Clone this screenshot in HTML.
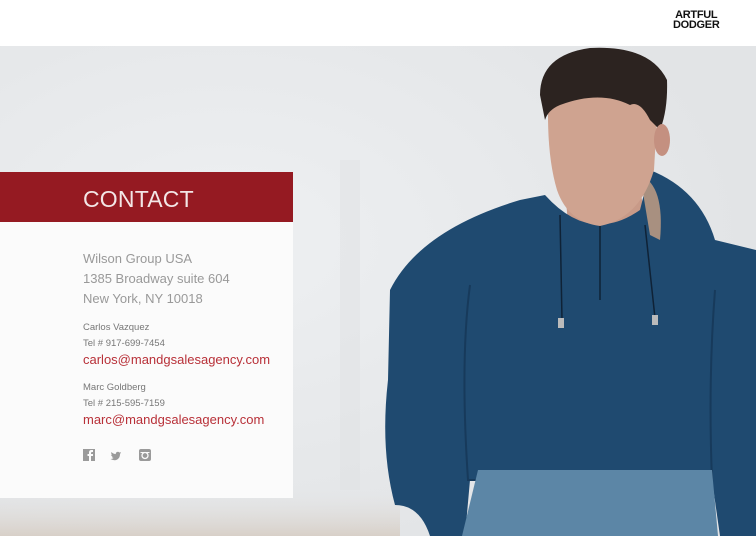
<!DOCTYPE html>
<html><head><style>
*{margin:0;padding:0}
body{width:756px;height:536px;overflow:hidden;position:relative;background:#fff;font-family:"Liberation Sans",sans-serif}
.hdr{position:absolute;left:0;top:0;width:756px;height:46px;background:#fff}
.logo{position:absolute;left:673px;top:10px;font-weight:bold;font-size:11px;line-height:10px;color:#111;text-align:center;letter-spacing:-0.3px}
.photo{position:absolute;left:0;top:46px;width:756px;height:490px}
.band{position:absolute;left:0;top:172px;width:293px;height:50px;background:#951a22}
.band span{position:absolute;left:83px;top:14px;color:#f3e6e6;font-size:23px;letter-spacing:0.2px}
.card{position:absolute;left:0;top:222px;width:293px;height:276px;background:#fbfbfb}
.t{position:absolute;left:83px;white-space:nowrap}
.a{color:#999;font-size:13px}
.s{color:#777;font-size:9.5px}
.e{color:#b83038;font-size:13px}
</style></head><body>
<div class="hdr"></div>
<div class="logo">ARTFUL<br>DODGER</div>
<div class="photo">
<svg width="756" height="490" viewBox="0 46 756 490" style="position:absolute;left:0;top:0">
<defs><radialGradient id="bg" cx="0.3" cy="0.4" r="0.7"><stop offset="0" stop-color="#eef0f2"/><stop offset="1" stop-color="#e2e4e6"/></radialGradient>
<linearGradient id="fl" x1="0" y1="0" x2="0" y2="1"><stop offset="0" stop-color="#e2e2e2" stop-opacity="0"/><stop offset="1" stop-color="#d8d0c8"/></linearGradient></defs>
<rect x="0" y="46" width="756" height="490" fill="url(#bg)"/>
<rect x="340" y="160" width="20" height="330" fill="#dfe1e3" opacity="0.5"/>
<rect x="0" y="490" width="400" height="46" fill="url(#fl)"/>
<!-- neck -->
<path d="M565 190 L640 190 L650 240 L570 245Z" fill="#c89a88"/>
<!-- jacket -->
<path d="M390 290 Q420 230 520 200 L545 195 Q590 245 640 210 L650 170 Q700 190 715 240 L756 250 L756 536 L720 536 L712 480 L470 480 L465 536 L430 536 Q420 505 395 505 Q380 450 388 380Z" fill="#1f4a70"/>
<path d="M640 175 Q665 185 660 240 L650 235Z" fill="#a89080"/>
<path d="M470 285 Q460 360 468 480 L712 480 Q708 380 715 290" fill="none" stroke="#173a5b" stroke-width="2"/>
<path d="M478 470 L712 470 L718 536 L462 536Z" fill="#5c86a6"/>
<path d="M560 215 L562 320 M600 220 L600 300 M645 225 L655 318" stroke="#0f2236" stroke-width="1.5" fill="none"/>
<rect x="558" y="318" width="6" height="10" fill="#bbb"/><rect x="652" y="315" width="6" height="10" fill="#bbb"/>
<!-- head -->
<path d="M548 115 Q548 85 578 75 Q630 65 658 100 L654 170 Q640 218 600 226 Q568 222 557 190 Q548 160 548 115Z" fill="#cfa390"/>
<path d="M540 95 Q540 55 590 48 Q650 45 667 80 Q668 110 660 130 L650 120 Q640 100 630 105 Q600 90 560 105 Q548 110 545 120Z" fill="#2c2320"/>
<ellipse cx="662" cy="140" rx="8" ry="16" fill="#c49080"/>
</svg>
</div>
<div class="band"><span>CONTACT</span></div>
<div class="card">
<div class="t a" style="top:29px">Wilson Group USA</div>
<div class="t a" style="top:49px">1385 Broadway suite 604</div>
<div class="t a" style="top:69px">New York, NY 10018</div>
<div class="t s" style="top:100px">Carlos Vazquez</div>
<div class="t s" style="top:116px">Tel # 917-699-7454</div>
<div class="t e" style="top:130px">carlos@mandgsalesagency.com</div>
<div class="t s" style="top:160px">Marc Goldberg</div>
<div class="t s" style="top:176px">Tel # 215-595-7159</div>
<div class="t e" style="top:190px">marc@mandgsalesagency.com</div>
<svg style="position:absolute;left:83px;top:226px" width="70" height="14">
<rect x="0" y="1" width="12" height="12" fill="#9a9a9a"/><path d="M8 13V8h2V6H8V5q0-1 1-1h1V2H8.5Q6 2 6 4.5V6H4.5v2H6v5z" fill="#fbfbfb"/>
<g transform="translate(9,0)"><path d="M29 4q-1 .5-1.7.5a2 2 0 0 0-3.5 1.6Q21 6 19.5 4q-.8 1.6.6 2.8-.6 0-1-.3 0 1.7 1.7 2-.5.2-1 .1.5 1.3 1.8 1.4-1.4 1.1-3.2 1 5.5 3 8.8-1.4.8-1.4.8-3.2Q28.6 4.7 29 4z" fill="#9a9a9a"/></g>
<rect x="56" y="1" width="12" height="12" rx="2" fill="#9a9a9a"/><circle cx="62" cy="7.5" r="3" fill="none" stroke="#fbfbfb" stroke-width="1.3"/><rect x="57.5" y="4" width="9" height="1" fill="#fbfbfb"/>
</svg>
</div>
</body></html>
